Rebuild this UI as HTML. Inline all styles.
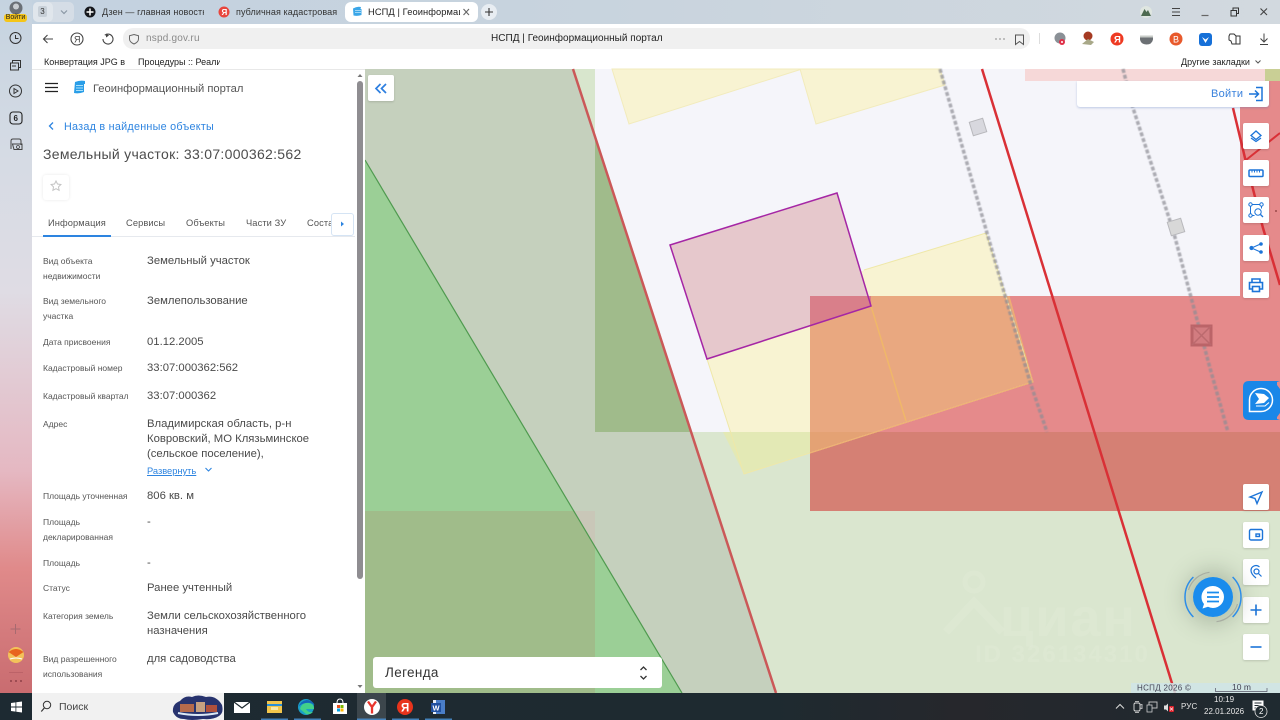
<!DOCTYPE html>
<html lang="ru"><head><meta charset="utf-8"><title>НСПД | Геоинформационный портал</title>
<style>
html,body{margin:0;padding:0;width:1280px;height:720px;overflow:hidden;background:#fff}
body{position:relative;font-family:"Liberation Sans","Noto Sans CJK SC",sans-serif;color:#444}
.t{position:absolute;white-space:nowrap;line-height:14px;height:14px}
.l{font-size:8.5px;color:#555}
.v{font-size:11.3px;color:#4a4a4a;margin-top:1px}
.tab{font-size:9.3px;color:#555;letter-spacing:.1px;margin-top:1px}
.btn{position:absolute;left:1243px;width:26px;height:26px;background:#fff;border-radius:2px;box-shadow:0 1px 2px rgba(0,0,0,.15)}
.btn svg{position:absolute;left:0;top:0}
svg.abs{position:absolute;left:0;top:0}
</style></head><body>

<!-- browser frame -->
<div style="position:absolute;left:0;top:0;width:1280px;height:24px;background:linear-gradient(90deg,#c3d2e0,#c7d3de 40%,#d2d9df)"></div>
<div style="position:absolute;left:0;top:0;width:32px;height:693px;background:linear-gradient(180deg,#c5d3e0 0,#d5dbe4 22%,#dfdce4 42%,#e5b8c2 68%,#e08a8a 82%,#c96c70 100%)"></div>
<div style="position:absolute;left:32px;top:24px;width:1248px;height:45px;background:#fff;border-radius:5px 0 0 0"></div>
<div style="position:absolute;left:123px;top:28px;width:907px;height:21px;background:#f0f0f0;border-radius:10px"></div>
<div style="position:absolute;left:32px;top:69px;width:333px;height:624px;background:#fff"></div>

<!-- map -->
<svg class="abs" width="1280" height="720" viewBox="0 0 1280 720">
<defs><filter id="soft" x="-20%" y="-5%" width="140%" height="110%"><feGaussianBlur stdDeviation=".6"/></filter></defs>
<rect x="365" y="69" width="915" height="624" fill="#f5f5fa"/>
<rect x="595" y="432" width="685" height="261" fill="#dae6cf"/>
<rect x="810" y="296" width="470" height="136" fill="#e58a8b"/>
<rect x="810" y="432" width="470" height="79" fill="#d58074"/>
<rect x="1240" y="81" width="40" height="215" fill="#e58a8b"/>
<rect x="1025" y="69" width="255" height="12" fill="#f6d8d8"/>
<rect x="1265" y="69" width="15" height="12" fill="#c9cf95"/>
<polygon points="573,69 595,69 595,140" fill="#d8e6cd"/>
<polygon points="365,69 573,69 776,693 682,693 365,160" fill="#c5d0bd"/>
<polygon points="365,160 682,693 365,693" fill="#9bcf96"/>
<polygon points="595,140 595,432 690,432" fill="#a0bb8b"/>
<polygon points="365,511 574,511 595,546 595,693 365,693" fill="#a0bc8a"/>
<polygon points="574,511 595,511 595,546" fill="#c9c7b8"/>
<!-- yellow plots -->
<polygon points="612,69 629,124 802,69" fill="#f8f3d2" stroke="#f2ebbc"/>
<polygon points="800,69 816,124 945,85 940,69" fill="#f8f3d2" stroke="#f2ebbc"/>
<polygon points="707,359 864,270 986,233 1033,382 744,474" fill="#f8f3d2"/>
<polygon points="810,296 1009,296 1033,382 810,453" fill="#e9a880"/>
<polygon points="810,432 876,432 810,453" fill="#e4a274"/>
<polygon points="723,432 810,432 810,453 744,474" fill="#e3e9b5"/>
<polyline points="707,359 744,474 1033,382 986,233 864,270" fill="none" stroke="#efe8a8" stroke-width="1"/>
<polyline points="810,453 1033,382 1009,296" fill="none" stroke="#efb070" stroke-width="1"/>
<line x1="871" y1="306" x2="906" y2="421" stroke="#f0b868" stroke-width="1.4"/>
<!-- purple plot -->
<polygon points="670,245 837,193 871,306 707,359" fill="#e6c8cc"/>
<polygon points="810,296 871,296 871,306 810,326" fill="#d97f8a"/>
<polygon points="670,245 837,193 871,306 707,359" fill="none" stroke="#a526a5" stroke-width="1.5"/>
<!-- grey dashed lines -->
<g filter="url(#soft)">
<polyline points="940,69 987,233 1030,382 1047,432" fill="none" stroke="#8c8c94" stroke-width="3.500" stroke-dasharray="4 2" opacity=".7"/>
<polyline points="1123,69 1133,108 1173,230 1210,368 1228,432" fill="none" stroke="#8c8c94" stroke-width="3.500" stroke-dasharray="4 2" opacity=".7"/>
</g>
<rect x="971" y="120" width="14" height="14" fill="#d8d8de" stroke="#b8b8bc" transform="rotate(-17 978 127)"/>
<rect x="1169" y="220" width="14" height="14" fill="#d8d8d8" stroke="#b8b8bc" transform="rotate(-17 1176 227)"/>
<rect x="1192" y="326" width="19" height="19" fill="#d27c80" stroke="#bb6468" stroke-width="3"/>
<path d="M1192 326l19 19M1211 326l-19 19" stroke="#bb6a6e" stroke-width="1.500"/>
<!-- lines -->
<line x1="365" y1="160" x2="682" y2="693" stroke="#4f9a4f" stroke-width="1.200"/>
<line x1="573" y1="69" x2="776" y2="693" stroke="#cb5858" stroke-width="2.500"/>
<line x1="982" y1="69" x2="1175" y2="693" stroke="#d93036" stroke-width="2.500"/>
<polyline points="1233,108 1245,158 1263,228 1280,285" fill="none" stroke="#d93036" stroke-width="2.500"/>
<line x1="1246" y1="160" x2="1280" y2="133" stroke="#d93036" stroke-width="2"/>
<circle cx="1276" cy="211" r="1" fill="#9a4a4a"/>
<!-- watermark -->
<g fill="none" stroke="#fff" opacity=".08">
<circle cx="974" cy="582" r="9" stroke-width="5"/>
<path d="M946 632l28-30 28 30" stroke-width="8"/>
</g>
<text x="1000" y="636" font-family="Liberation Sans" font-size="54" font-weight="700" fill="#fff" opacity=".08" letter-spacing="2">циан</text>
<text x="975" y="662" font-family="Liberation Sans" font-size="24" font-weight="700" fill="#fff" opacity=".08" letter-spacing="2">ID 326134310</text>
<!-- attribution -->
<rect x="1131" y="683" width="149" height="10" fill="#cfe4e8" opacity=".85"/>
<text x="1137" y="690.500" font-family="Liberation Sans" font-size="8" fill="#445" letter-spacing=".3">НСПД 2026 ©</text>
<text x="1232" y="690" font-family="Liberation Sans" font-size="8.500" fill="#445">10 m</text>
<path d="M1215.500 688v3.500h51.500v-3.500" fill="none" stroke="#556" stroke-width=".7"/>
</svg>

<!-- scrollbar -->
<div style="position:absolute;left:355px;top:69px;width:10px;height:624px;background:#fff"></div>
<div style="position:absolute;left:357px;top:81px;width:6px;height:498px;background:#8f8d91;border-radius:3px"></div>
<svg class="abs" width="1280" height="720"><path d="M357.500 77l2.500-3 2.500 3zM357.500 685l2.500 3 2.500-3z" fill="#777"/></svg>

<!-- tab strip -->
<div style="position:absolute;left:33px;top:2px;width:41px;height:20px;background:#d5dde6;border-radius:5px"></div>
<div style="position:absolute;left:33px;top:2px;width:20px;height:20px;background:#e0e6ec;border-radius:5px"></div>
<div class="t" style="left:38px;top:6px;width:9px;height:11px;line-height:11px;text-align:center;background:#c8d0d8;border-radius:2px;font-size:8px;color:#333">3</div>
<div class="t" style="left:102px;top:5px;font-size:9px;color:#333;letter-spacing:.1px;width:102px;overflow:hidden">Дзен — главная новостн</div>
<div class="t" style="left:236px;top:5px;font-size:9px;color:#333;letter-spacing:.1px;width:102px;overflow:hidden">публичная кадастровая к</div>
<div style="position:absolute;left:345px;top:2px;width:133px;height:20px;background:#fff;border-radius:6px"></div>
<div class="t" style="left:368px;top:5px;font-size:9.300px;color:#222;letter-spacing:.1px;width:92px;overflow:hidden">НСПД | Геоинформаци</div>
<svg class="abs" width="1280" height="720">
<!-- profile -->
<circle cx="16" cy="8" r="6.500" fill="#6b7076"/><circle cx="16" cy="6.500" r="3" fill="#c8ccd0"/>
<!-- tabs icons -->
<path d="M61 10.500l3 3 3-3" fill="none" stroke="#8b98a5" stroke-width="1.200"/>
<circle cx="90" cy="12" r="5.500" fill="#16181c"/><path d="M90 8.500v7M86.500 12h7" stroke="#fff" stroke-width="1.500"/>
<circle cx="224" cy="12" r="5.500" fill="#e8453c"/>
<text x="221.500" y="15" font-size="8" font-family="Liberation Sans" font-weight="700" fill="#fff">Я</text>
<path d="M353 8.500q4-2.500 8-1.500l-.5 2h1v6q-4 1.500-8 .5z" fill="#3aa6e8"/><path d="M355 10.500h6M355 12.500h6" stroke="#bfe6fa" stroke-width=".8"/>
<path d="M463.500 9l5.500 6M469 9l-5.500 6" stroke="#666" stroke-width="1.100"/>
<circle cx="489" cy="12" r="8" fill="#e8edf2"/><path d="M489 8v8M485 12h8" stroke="#333" stroke-width="1.100"/>
<!-- win controls -->
<circle cx="1146" cy="12" r="6" fill="#dfe6e0"/><path d="M1141 16l3.500-7 2 3 1.500-2 3 6z" fill="#4d6a50"/>
<path d="M1172 8.500h8M1172 12h8M1172 15.500h8" stroke="#444" stroke-width="1"/>
<path d="M1201.500 15.500h7" stroke="#666" stroke-width="1.200"/>
<path d="M1231 10.500h5.500v5.500h-5.500zM1233 10.500v-2.500h5.500v5.500h-2" fill="none" stroke="#333" stroke-width="1"/>
<path d="M1260.500 8.500l6.500 6.500M1267 8.500l-6.500 6.500" stroke="#444" stroke-width="1.100"/>
<!-- toolbar -->
<path d="M53 39h-9.500M47.500 35l-4 4 4 4" fill="none" stroke="#444" stroke-width="1.100"/>
<circle cx="77" cy="39" r="6" fill="none" stroke="#444" stroke-width="1.100"/>
<text x="74" y="42.500" font-size="9" font-family="Liberation Sans" fill="#444">Я</text>
<path d="M102 39a5 5 0 1 0 1.800-3.800" transform="translate(1 0)" fill="none" stroke="#444" stroke-width="1.100"/>
<path d="M106 33.500v4l3-2z" fill="#444"/>
<path d="M134 34.500l4.500 1.300v3.200q0 3-4.500 5q-4.500-2-4.500-5v-3.200z" fill="none" stroke="#666" stroke-width="1"/>
<circle cx="996" cy="39" r=".9" fill="#999"/><circle cx="1000" cy="39" r=".9" fill="#999"/><circle cx="1004" cy="39" r=".9" fill="#999"/>
<path d="M1015.500 35h8v9.500l-4-3-4 3z" fill="none" stroke="#555" stroke-width="1"/>
<line x1="1039.500" y1="33" x2="1039.500" y2="44" stroke="#ddd"/>
<circle cx="1060" cy="38" r="5.500" fill="#8a9096"/><circle cx="1062" cy="42" r="3" fill="#e03048"/><circle cx="1062" cy="42" r="1" fill="#fff"/>
<circle cx="1088" cy="36" r="4.500" fill="#a53a22"/><path d="M1082 44l6-5 6 3-3 3z" fill="#a8a888"/>
<circle cx="1117" cy="39" r="6.500" fill="#ee3a22"/>
<text x="1114" y="42.500" font-size="9.500" font-family="Liberation Sans" font-weight="700" fill="#fff">Я</text>
<path d="M1140 36.500h13v3q-1 5-6.500 5t-6.500-5z" fill="#6c7074"/><rect x="1140" y="35.500" width="13" height="2" fill="#c8ccc8"/>
<circle cx="1176" cy="39" r="6.500" fill="#e85a2c"/>
<text x="1173" y="42.500" font-size="9" font-family="Liberation Sans" fill="#fff">В</text>
<rect x="1199" y="33" width="13" height="13" rx="3" fill="#1670d8"/><path d="M1202 37l3.500 2.500 3.500-2.500-3.500 6z" fill="#fff"/>
<path d="M1230 34h4l2 2v8h-4l-1-3-2-1v-4zM1236 36h4v8h-4" fill="none" stroke="#333" stroke-width="1"/>
<path d="M1264 33.500v8M1260.500 38.500l3.500 3.500 3.500-3.500M1260 44.500h8" fill="none" stroke="#444" stroke-width="1"/>
<path d="M1255.500 60.500l2.500 2.500 2.500-2.500" fill="none" stroke="#555" stroke-width="1"/>
<!-- side icons -->
<circle cx="15.500" cy="38" r="5.500" fill="none" stroke="#333" stroke-width="1"/><path d="M15.500 35v3.500h3" fill="none" stroke="#333"/>
<path d="M10.500 63h8v7h-8zM12.500 63v-2.500h8v7h-2M12 66h4" fill="none" stroke="#333" stroke-width="1"/>
<circle cx="15.500" cy="91" r="6" fill="none" stroke="#333" stroke-width="1"/><path d="M14 88.500l4 2.500-4 2.500z" fill="none" stroke="#333"/>
<rect x="10" y="112" width="12" height="12" rx="3" fill="none" stroke="#222" stroke-width="1.100"/>
<text x="13.500" y="121" font-size="8" font-weight="700" font-family="Liberation Sans" fill="#222">6</text>
<path d="M11 149v-8q0-2 2-2h6q2 0 2 2v4" fill="none" stroke="#444"/><path d="M12.500 144h9.500v5.500h-8z" fill="none" stroke="#444"/><circle cx="18" cy="147" r="1.500" fill="none" stroke="#444" stroke-width=".8"/>
<path d="M15.500 624v10M10.500 629h10" stroke="#a86a70" stroke-width="1"/>
<circle cx="16" cy="655" r="8" fill="#f3c25a"/><path d="M8.500 652q7.500-6 15 0l-7.500 5z" fill="#e8641e"/><path d="M10 659q6-2 12 0" stroke="#fff" fill="none"/>
<line x1="9" y1="672.500" x2="23" y2="672.500" stroke="#b05a60" stroke-width=".6"/>
<circle cx="11" cy="681" r="1" fill="#8f4248"/><circle cx="16" cy="681" r="1" fill="#8f4248"/><circle cx="21" cy="681" r="1" fill="#8f4248"/>
<!-- panel header -->
<path d="M45 83.500h13M45 87.500h13M45 91.500h13" stroke="#222" stroke-width="1.300"/>
<path d="M75 82q5-2 10-1v3h-1v8q-5 2-10 1z" fill="#2a9ee8"/><path d="M76 85.500h7M76 88h7M76 90.500h7" stroke="#a8e0fa" stroke-width=".9"/>
<path d="M53 122.500l-3.500 3.500 3.500 3.500" fill="none" stroke="#2d84e0" stroke-width="1.300"/>
<path d="M56 181l1.500 3 3.400.5-2.400 2.400.6 3.400-3.100-1.600-3.100 1.600.6-3.400-2.400-2.400 3.400-.5z" fill="none" stroke="#c4c4c4" stroke-width="1"/>
<path d="M205.500 468l3 3 3-3" fill="none" stroke="#2d84e0" stroke-width="1.100"/>
</svg>

<div class="t" style="left:4px;top:14px;width:23px;height:8px;line-height:8px;background:#f5c518;border-radius:3px;font-size:7px;color:#222;text-align:center">Войти</div>

<!-- toolbar text -->
<div class="t" style="left:146px;top:32px;font-size:10px;color:#8a8a8a;letter-spacing:.2px">nspd.gov.ru</div>
<div class="t" style="left:491px;top:32px;font-size:10px;color:#222;letter-spacing:.02px">НСПД | Геоинформационный портал</div>
<div class="t" style="left:44px;top:55px;font-size:9px;color:#222;width:81px;overflow:hidden">Конвертация JPG в I</div>
<div class="t" style="left:138px;top:55px;font-size:9px;color:#222;width:82px;overflow:hidden">Процедуры :: Реали</div>
<div class="t" style="left:1181px;top:55px;font-size:9px;color:#222">Другие закладки</div>
<div style="position:absolute;left:32px;top:68.500px;width:333px;height:1px;background:#e8e8e8"></div>

<!-- panel -->
<div class="t" style="left:93px;top:82px;font-size:11.200px;color:#555">Геоинформационный портал</div>
<div class="t" style="left:64px;top:120px;font-size:10.800px;color:#2d84e0;letter-spacing:.25px">Назад в найденные объекты</div>
<div class="t" style="left:43px;top:147px;font-size:14px;color:#4c4c4c;letter-spacing:.3px">Земельный участок: 33:07:000362:562</div>
<div style="position:absolute;left:43px;top:175px;width:26px;height:25px;border-radius:3px;box-shadow:0 0 3px rgba(0,0,0,.09)"></div>

<div class="t tab" style="left:48px;top:215px">Информация</div>
<div class="t tab" style="left:126px;top:215px">Сервисы</div>
<div class="t tab" style="left:186px;top:215px">Объекты</div>
<div class="t tab" style="left:246px;top:215px">Части ЗУ</div>
<div class="t tab" style="left:307px;top:215px">Состав</div>
<div style="position:absolute;left:32px;top:236px;width:323px;height:1px;background:#e6e9ee"></div>
<div style="position:absolute;left:43px;top:234.500px;width:68px;height:2px;background:#2d84e0"></div>
<div style="position:absolute;left:331px;top:213px;width:21px;height:21px;background:#fff;border:1px solid #d5e4f4;border-radius:3px"></div>
<svg class="abs" width="1280" height="720"><path d="M341 221.500l3 2.500-3 2.500z" fill="#2d84e0"/></svg>

<div class="t l" style="left:43px;top:254px">Вид объекта</div>
<div class="t l" style="left:43px;top:269px">недвижимости</div>
<div class="t v" style="left:147px;top:253px">Земельный участок</div>
<div class="t l" style="left:43px;top:294px">Вид земельного</div>
<div class="t l" style="left:43px;top:309px">участка</div>
<div class="t v" style="left:147px;top:293px">Землепользование</div>
<div class="t l" style="left:43px;top:335px">Дата присвоения</div>
<div class="t v" style="left:147px;top:334px">01.12.2005</div>
<div class="t l" style="left:43px;top:361px">Кадастровый номер</div>
<div class="t v" style="left:147px;top:360px">33:07:000362:562</div>
<div class="t l" style="left:43px;top:389px">Кадастровый квартал</div>
<div class="t v" style="left:147px;top:388px">33:07:000362</div>
<div class="t l" style="left:43px;top:417px">Адрес</div>
<div class="t v" style="left:147px;top:416px">Владимирская область, р-н</div>
<div class="t v" style="left:147px;top:431px">Ковровский, МО Клязьминское</div>
<div class="t v" style="left:147px;top:446px">(сельское поселение),</div>
<div class="t" style="left:147px;top:464px;font-size:9.300px;color:#2d84e0;text-decoration:underline">Развернуть</div>
<div class="t l" style="left:43px;top:489px">Площадь уточненная</div>
<div class="t v" style="left:147px;top:488px">806 кв. м</div>
<div class="t l" style="left:43px;top:515px">Площадь</div>
<div class="t l" style="left:43px;top:530px">декларированная</div>
<div class="t v" style="left:147px;top:514px">-</div>
<div class="t l" style="left:43px;top:556px">Площадь</div>
<div class="t v" style="left:147px;top:555px">-</div>
<div class="t l" style="left:43px;top:581px">Статус</div>
<div class="t v" style="left:147px;top:580px">Ранее учтенный</div>
<div class="t l" style="left:43px;top:609px">Категория земель</div>
<div class="t v" style="left:147px;top:608px">Земли сельскохозяйственного</div>
<div class="t v" style="left:147px;top:623px">назначения</div>
<div class="t l" style="left:43px;top:652px">Вид разрешенного</div>
<div class="t l" style="left:43px;top:667px">использования</div>
<div class="t v" style="left:147px;top:651px">для садоводства</div>

<!-- map controls -->
<div class="btn" style="left:368px;top:75px"><svg width="26" height="26"><path d="M12.500 9l-4.500 4.500 4.500 4.500M18 9l-4.500 4.500 4.500 4.500" fill="none" stroke="#2d7fe0" stroke-width="1.700"/></svg></div>
<div style="position:absolute;left:1077px;top:81px;width:192px;height:26px;background:#fff;border-radius:0 0 3px 3px;box-shadow:0 1px 2px rgba(60,100,180,.3)"></div>
<div class="t" style="left:1211px;top:87px;font-size:11px;color:#3a82dc;letter-spacing:.3px">Войти</div>
<svg class="abs" width="1280" height="720"><path d="M1249 94h9.500M1255 90.500l3.500 3.500-3.500 3.500M1256 87.500h6v13h-6" fill="none" stroke="#1c74d8" stroke-width="1.500"/></svg>

<div class="btn" style="top:123px"><svg width="26" height="26" fill="none" stroke="#1c74d8" stroke-width="1.300"><path d="M13 8l5 4.500-5 4-5-4z"/><path d="M8 15l5 3.500 5-3.500"/></svg></div>
<div class="btn" style="top:160px"><svg width="26" height="26" fill="none" stroke="#1c74d8" stroke-width="1.500"><rect x="6" y="10" width="14" height="6.500" rx="1"/><path d="M9 10v2.500M11.500 10v2.500M14 10v2.500M16.500 10v2.500" stroke-width="1"/></svg></div>
<div class="btn" style="top:197px"><svg width="26" height="26" fill="none" stroke="#1c74d8" stroke-width="1"><circle cx="7.500" cy="7.500" r="1.700"/><circle cx="18.500" cy="7.500" r="1.700"/><circle cx="7.500" cy="18.500" r="1.700"/><path d="M9.500 7.500h7M7.500 9.500v7M9.500 18.500h2M18.500 9.500v2"/><circle cx="15" cy="15" r="3.200"/><path d="M17.500 17.500l2.500 2.500" stroke-width="1.300"/></svg></div>
<div class="btn" style="top:235px"><svg width="26" height="26" fill="none" stroke="#1c74d8" stroke-width="1"><path d="M17.500 9l-9 4 9 4"/><circle cx="18" cy="9" r="1.300" fill="#1c74d8"/><circle cx="8.500" cy="13" r="1.600" fill="#1c74d8"/><circle cx="18" cy="17" r="1.300" fill="#1c74d8"/></svg></div>
<div class="btn" style="top:272px"><svg width="26" height="26" fill="none" stroke="#1c74d8" stroke-width="1.600"><path d="M9 10.500v-3.500h8v3.500M9 17h-2.500v-6.500h13v6.500h-2.500"/><rect x="9.500" y="14.500" width="7" height="5"/></svg></div>

<!-- blue widget -->
<svg class="abs" width="1280" height="720">
<path d="M1243 387q0-6 6-6h31l-3 1v3l3 4v24l-3 4v2l3 1h-31q-6 0-6-6z" fill="#1a87e8"/>
<path d="M1261 388.500a11.500 11.500 0 1 1 0 23h-11.500v-11.500a11.500 11.500 0 0 1 11.500-11.500z" fill="none" stroke="#fff" stroke-width="1.500"/>
<path d="M1255 393l9 1 5 4-5 5-9 1 4-5z" fill="#fff"/>
<path d="M1256 406h9l4-3.500" fill="none" stroke="#fff" stroke-width="1"/>
</svg>

<div class="btn" style="top:484px"><svg width="26" height="26"><path d="M19 8l-12 5 5 1.500 2 5z" fill="none" stroke="#1c74d8" stroke-width="1.400"/></svg></div>
<div class="btn" style="top:522px"><svg width="26" height="26" fill="none" stroke="#1c74d8" stroke-width="1.400"><rect x="6.500" y="7.500" width="13" height="10.500" rx="1.500"/><rect x="13" y="12" width="3.500" height="2.500"/></svg></div>
<div class="btn" style="top:559px"><svg width="26" height="26" fill="none" stroke="#1c74d8" stroke-width="1.200"><path d="M13 19q-5-4-5-7.500a5 5 0 0 1 8.500-3.500"/><circle cx="13.500" cy="12.500" r="2.500"/><path d="M15.500 14.500l3 3"/></svg></div>
<div class="btn" style="top:597px"><svg width="26" height="26"><path d="M13 7.500v11M7.500 13h11" stroke="#1c74d8" stroke-width="1.600"/></svg></div>
<div class="btn" style="top:634px"><svg width="26" height="26"><path d="M7.500 13h11" stroke="#1c74d8" stroke-width="1.600"/></svg></div>

<!-- chat -->
<div style="position:absolute;left:1193px;top:577px;width:40px;height:40px;border-radius:50%;box-shadow:0 0 22px 8px rgba(60,80,60,.26)"></div>
<svg class="abs" width="1280" height="720" fill="none">
<path d="M1193.400 577a28 28 0 0 0 0 40M1232.600 577a28 28 0 0 1 0 40" stroke="#2d8de8" stroke-width="1.500"/>
<path d="M1188.500 590a25 25 0 0 1 21-17.700M1237.500 604a25 25 0 0 1-21 17.700" stroke="#a8ada2" stroke-width="1.200"/>
<circle cx="1213" cy="597" r="20" fill="#1a8ced"/>
<path d="M1213 586a11 11 0 1 1-5 20.800l-5.500 1.700 1.500-4.500a11 11 0 0 1 9-18z" fill="#fff"/>
<path d="M1207 592.500h12M1207 597h12M1207 601.500h12" stroke="#1a8ced" stroke-width="1.700"/>
</svg>

<!-- legend -->
<div style="position:absolute;left:373px;top:657px;width:289px;height:31px;background:#fff;border-radius:3px"></div>
<div class="t" style="left:385px;top:666px;font-size:13.500px;color:#333;letter-spacing:.35px">Легенда</div>
<svg class="abs" width="1280" height="720"><path d="M640.500 670l3-3 3 3M640.500 676l3 3 3-3" fill="none" stroke="#333" stroke-width="1.300"/></svg>

<!-- taskbar -->
<div style="position:absolute;left:0;top:693px;width:1280px;height:27px;background:linear-gradient(90deg,#1d2a32,#1e2a30 60%,#26272c 75%,#1f2a30)"></div>
<div style="position:absolute;left:32px;top:693px;width:192px;height:27px;background:#f1f1f1"></div>
<div class="t" style="left:59px;top:700px;font-size:10.500px;color:#444">Поиск</div>
<div style="position:absolute;left:357px;top:693px;width:29px;height:27px;background:#3c464c"></div>
<svg class="abs" width="1280" height="720">
<path d="M11 703l4.500-.6v4.100h-4.500zM16.300 702.300l5.700-.8v5h-5.700zM11 707.500h4.500v4.100l-4.500-.6zM16.300 707.500h5.700v5l-5.700-.8z" fill="#fff"/>
<circle cx="47" cy="705" r="3.700" fill="none" stroke="#333" stroke-width="1"/><path d="M44.300 708l-3 3.500" stroke="#333" stroke-width="1.200"/>
<!-- search art -->
<path d="M173 712q-1-8 7-11 5-6 12-4 6-3 14 0 10-2 16 8 2 8-3 11-6 4-16 3-12 2-19 0-8 0-11-7z" fill="#27336e"/>
<rect x="180" y="704" width="14" height="8" fill="#b56a4c"/><rect x="196" y="702" width="9" height="10" fill="#c6a080"/><rect x="206" y="705" width="11" height="7" fill="#b0503c"/>
<path d="M178 713q20 4 40 0" stroke="#dbe8f5" stroke-width="2" fill="none"/>
<!-- apps -->
<path d="M234 702h16v11h-16z" fill="#fff"/><path d="M234 702l8 6 8-6" fill="none" stroke="#1f2a30" stroke-width="1.200"/>
<rect x="267" y="701" width="15" height="12" fill="#f3c64c"/><rect x="267" y="704" width="15" height="2" fill="#2a90d8"/><rect x="271" y="707" width="7" height="3" fill="#f8e8a8"/>
<circle cx="306" cy="707" r="8" fill="#1aa0c8"/><path d="M300 709q2-7 9-6 5 1 5 6h-8q2 4 7 3-3 3-7 2" fill="#42d08a"/><path d="M298.500 707q2-6 8-7 6 0 8 5-4-3-9-2-5 1-7 4z" fill="#1466b8"/>
<path d="M333 703h14v11h-14z" fill="#fff"/><path d="M337 703q0-4 3-4t3 4" fill="none" stroke="#fff"/>
<rect x="337" y="705" width="3" height="3" fill="#e8501c"/><rect x="340.500" y="705" width="3" height="3" fill="#7cb800"/><rect x="337" y="708.500" width="3" height="3" fill="#00a4e8"/><rect x="340.500" y="708.500" width="3" height="3" fill="#ffb800"/>
<circle cx="372" cy="707" r="8" fill="#fff"/><path d="M368 701.500l4 5.500 4-5.500M372 707v6.500" stroke="#e8352c" stroke-width="2.300" fill="none"/>
<circle cx="405" cy="707" r="8" fill="#e8341c"/>
<text x="401" y="711.500" font-family="Liberation Sans" font-size="11.500" font-weight="700" fill="#fff">Я</text>
<rect x="433" y="700" width="12" height="14" fill="#e8eef8"/><rect x="436" y="700" width="9" height="14" fill="#4a7ec8"/><rect x="431" y="703" width="10" height="9" fill="#1f4fa0"/>
<text x="432.500" y="710.500" font-family="Liberation Sans" font-size="7.500" font-weight="700" fill="#fff">W</text>
<g fill="#4a8fd0" opacity=".85"><rect x="261" y="718.500" width="27" height="1.500"/><rect x="294" y="718.500" width="27" height="1.500"/><rect x="357" y="718.500" width="29" height="1.500"/><rect x="392" y="718.500" width="27" height="1.500"/><rect x="425" y="718.500" width="27" height="1.500"/></g>
<!-- tray -->
<path d="M1116 708.500l4-4 4 4" fill="none" stroke="#ddd" stroke-width="1"/>
<rect x="1134" y="703" width="6" height="8" rx="1.500" fill="none" stroke="#ddd" stroke-width=".9"/><path d="M1135 701.500h4M1140 705l2-.5v4l-2-.5M1135 712.500h4" stroke="#ddd" stroke-width=".8" fill="none"/>
<rect x="1149" y="702" width="8" height="6" fill="none" stroke="#ccc" stroke-width=".9"/><rect x="1147" y="705" width="5" height="7" fill="#1f2a30" stroke="#ccc" stroke-width=".8"/>
<path d="M1164 705.500h2l2-2v8l-2-2h-2z" fill="#ddd"/>
<rect x="1169" y="706" width="5" height="6" rx="1" fill="#e0202a"/><path d="M1170 707.500l3 3M1173 707.500l-3 3" stroke="#fff" stroke-width=".7"/>
<path d="M1252.500 700.500h11v10h-11z" fill="#fff"/><path d="M1254.500 703h7M1254.500 705.500h7M1254.500 708h5" stroke="#1f2a30" stroke-width=".9"/>
<circle cx="1261" cy="711.500" r="6" fill="#1f2a30" stroke="#ddd" stroke-width=".8"/>
</svg>
<div class="t" style="left:1181px;top:700px;font-size:8px;color:#e4e4e4;letter-spacing:.1px">РУС</div>
<div class="t" style="left:1214px;top:693px;font-size:8px;color:#e8e8e8">10:19</div>
<div class="t" style="left:1204px;top:705px;font-size:8px;color:#e8e8e8">22.01.2026</div>
<div class="t" style="left:1259px;top:704.500px;font-size:8px;color:#fff">2</div>

</body></html>
